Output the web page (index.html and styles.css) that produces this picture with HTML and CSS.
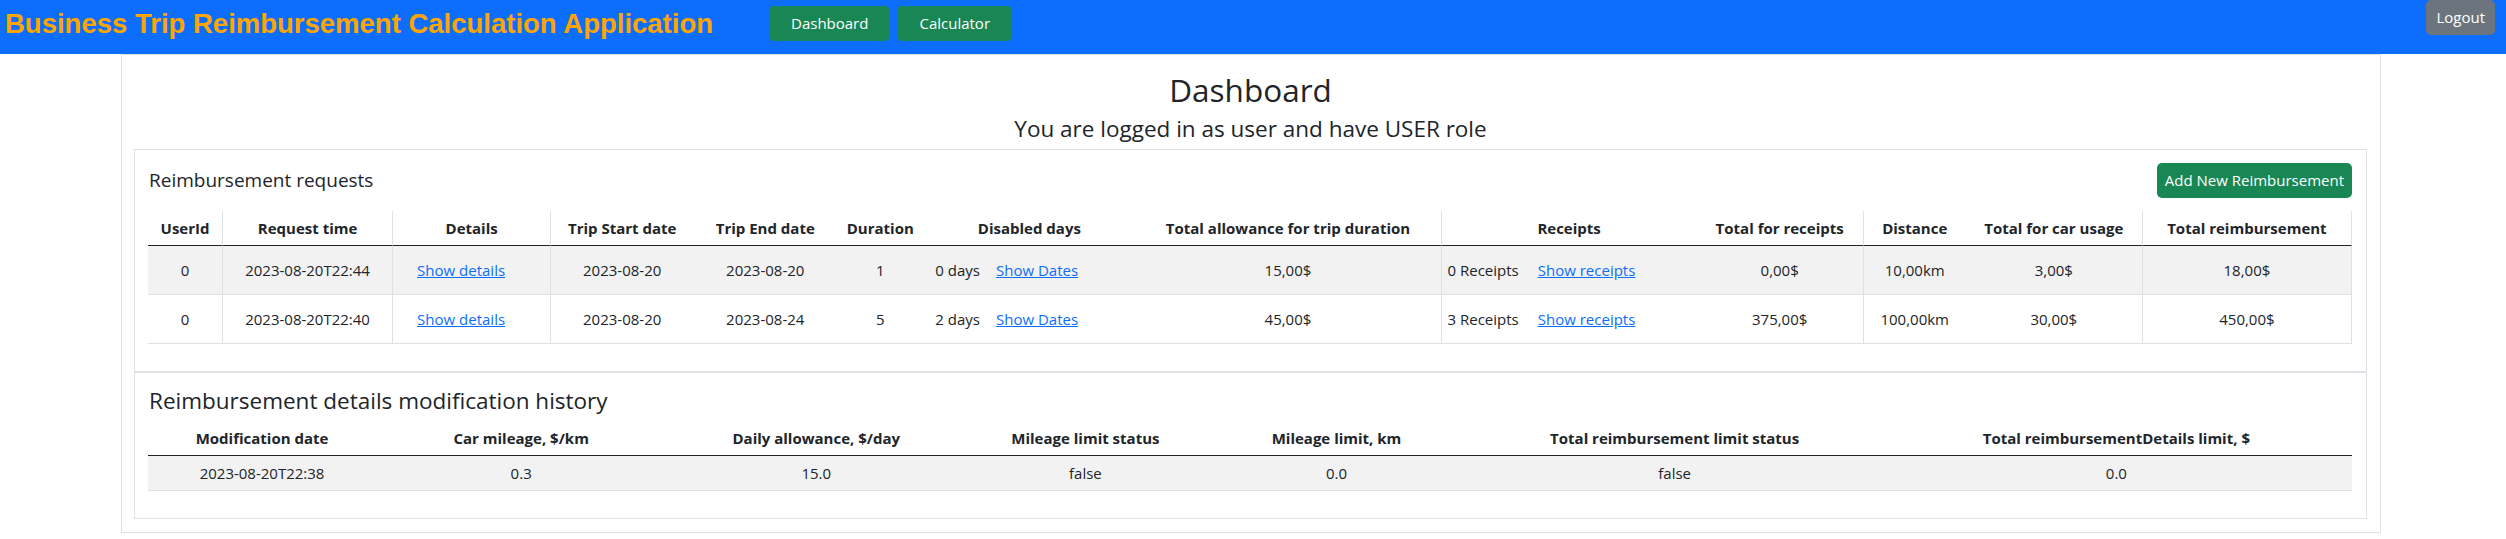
FILE: index.html
```html
<!DOCTYPE html>
<html lang="en">
<head>
<meta charset="utf-8">
<title>Dashboard</title>
<link rel="stylesheet" href="styles.css">
</head>
<body>
<nav class="topbar">
  <span class="brand">Business Trip Reimbursement Calculation Application</span>
  <div class="nav-links">
    <a class="btn btn-green nav-btn" href="#">Dashboard</a>
    <a class="btn btn-green nav-btn" href="#">Calculator</a>
  </div>
  <a class="btn btn-gray logout" href="#">Logout</a>
</nav>

<main class="page">
  <h2 class="page-title">Dashboard</h2>
  <h4 class="page-sub">You are logged in as user and have USER role</h4>

  <section class="card">
    <div class="card-head">
      <h5 class="card-title">Reimbursement requests</h5>
      <a class="btn btn-green add-btn" href="#">Add New Reimbursement</a>
    </div>
    <table class="data requests">
      <colgroup>
        <col style="width:74px"><col style="width:171px"><col style="width:158px"><col style="width:142px">
        <col style="width:144px"><col style="width:86px"><col style="width:212px"><col style="width:305px">
        <col style="width:256px"><col style="width:167px"><col style="width:102px"><col style="width:176px">
        <col style="width:210px">
      </colgroup>
      <thead>
        <tr>
          <th>UserId</th>
          <th class="bl br">Request time</th>
          <th class="br">Details</th>
          <th>Trip Start date</th>
          <th>Trip End date</th>
          <th>Duration</th>
          <th>Disabled days</th>
          <th>Total allowance for trip duration</th>
          <th class="bl">Receipts</th>
          <th class="br">Total for receipts</th>
          <th>Distance</th>
          <th>Total for car usage</th>
          <th class="bl br">Total reimbursement</th>
        </tr>
      </thead>
      <tbody>
        <tr>
          <td>0</td>
          <td class="bl br">2023-08-20T22:44</td>
          <td class="br left details"><a href="#">Show details</a></td>
          <td>2023-08-20</td>
          <td>2023-08-20</td>
          <td>1</td>
          <td class="left disabled">0 days<a class="inline-link dates" href="#">Show Dates</a></td>
          <td>15,00$</td>
          <td class="bl left receipts">0 Receipts<a class="inline-link rec" href="#">Show receipts</a></td>
          <td class="br">0,00$</td>
          <td>10,00km</td>
          <td>3,00$</td>
          <td class="bl br">18,00$</td>
        </tr>
        <tr>
          <td>0</td>
          <td class="bl br">2023-08-20T22:40</td>
          <td class="br left details"><a href="#">Show details</a></td>
          <td>2023-08-20</td>
          <td>2023-08-24</td>
          <td>5</td>
          <td class="left disabled">2 days<a class="inline-link dates" href="#">Show Dates</a></td>
          <td>45,00$</td>
          <td class="bl left receipts">3 Receipts<a class="inline-link rec" href="#">Show receipts</a></td>
          <td class="br">375,00$</td>
          <td>100,00km</td>
          <td>30,00$</td>
          <td class="bl br">450,00$</td>
        </tr>
      </tbody>
    </table>
  </section>

  <section class="card">
    <h4 class="card-title-lg">Reimbursement details modification history</h4>
    <table class="data history">
      <colgroup>
        <col style="width:228px"><col style="width:290px"><col style="width:300px"><col style="width:238px">
        <col style="width:264px"><col style="width:412px"><col style="width:471px">
      </colgroup>
      <thead>
        <tr>
          <th>Modification date</th>
          <th>Car mileage, $/km</th>
          <th>Daily allowance, $/day</th>
          <th>Mileage limit status</th>
          <th>Mileage limit, km</th>
          <th>Total reimbursement limit status</th>
          <th>Total reimbursementDetails limit, $</th>
        </tr>
      </thead>
      <tbody>
        <tr>
          <td>2023-08-20T22:38</td>
          <td>0.3</td>
          <td>15.0</td>
          <td>false</td>
          <td>0.0</td>
          <td>false</td>
          <td>0.0</td>
        </tr>
      </tbody>
    </table>
  </section>
</main>
</body>
</html>
```
FILE: styles.css
```css
* {
  box-sizing: border-box;
}

body {
  margin: 0;
  font-family: "Open Sans", "Noto Sans", sans-serif;
  font-size: 15px;
  color: #212529;
  background: #ffffff;
}

a {
  color: #0d6efd;
}

/* ---------- top bar ---------- */
.topbar {
  display: flex;
  align-items: flex-start;
  height: 54px;
  background: #0d6efd;
  padding: 0 11px 0 5px;
}

.brand {
  font-family: "Liberation Sans", Arial, sans-serif;
  font-weight: 700;
  font-size: 27.5px;
  line-height: 32px;
  color: #ffa500;
  margin-top: 8px;
  white-space: nowrap;
}

.nav-links {
  display: flex;
  gap: 7px;
  margin-left: 56px;
  margin-top: 6px;
}

.btn {
  display: inline-block;
  height: 35px;
  line-height: 35px;
  font-size: 15px;
  color: #ffffff;
  text-decoration: none;
  text-align: center;
  border-radius: 5px;
  white-space: nowrap;
}

.btn-green {
  background: #198754;
}

.btn-gray {
  background: #6c757d;
}

.nav-btn {
  padding: 0 22px;
}

.logout {
  margin-left: auto;
  padding: 0 10px;
}

/* ---------- page ---------- */
.page {
  margin-left: 121px;
  width: 2260px;
  border: 1px solid #dee2e6;
  padding: 17px 13px 13px 12px;
}

.page-title {
  margin: 0 0 7px;
  font-size: 31.5px;
  line-height: 36px;
  font-weight: 500;
  text-align: center;
}

.page-sub {
  margin: 0 0 7px;
  font-size: 22.5px;
  line-height: 27px;
  font-weight: 500;
  text-align: center;
}

.card {
  border: 1px solid #dee2e6;
  padding: 13px 14px 11px 13px;
}

.card + .card {
  padding-top: 14px;
}

.card-head {
  display: flex;
  align-items: center;
  justify-content: space-between;
  margin-bottom: 13px;
}

.card-title {
  margin: 0 0 0 1px;
  font-size: 19px;
  line-height: 23px;
  font-weight: 500;
}

.add-btn {
  padding: 0 8px;
}

.card-title-lg {
  margin: 0 0 7px 1px;
  font-size: 22.5px;
  line-height: 27px;
  font-weight: 500;
}

/* ---------- tables ---------- */
.data {
  width: 100%;
  table-layout: fixed;
  border-collapse: separate;
  border-spacing: 0;
  margin-bottom: 16px;
}

.data th {
  font-weight: 700;
  padding: 7px 4px;
  line-height: 20px;
  text-align: center;
  vertical-align: middle;
  white-space: nowrap;
  border-bottom: 1px solid #212529;
}

.data td {
  padding: 0 4px;
  text-align: center;
  vertical-align: middle;
  white-space: nowrap;
  border-bottom: 1px solid #dee2e6;
}

.requests td {
  line-height: 48px;
}

.history td {
  line-height: 34px;
}

.data tbody tr:nth-child(odd) td {
  background: #f2f2f2;
}

.data .bl {
  border-left: 1px solid #dee2e6;
}

.data .br {
  border-right: 1px solid #dee2e6;
}

.data td.left {
  text-align: left;
}

.data td.details {
  padding-left: 24px;
}

.data td.disabled {
  padding-left: 12px;
}

.data td.receipts {
  padding-left: 6px;
}

.inline-link.dates {
  margin-left: 16px;
}

.inline-link.rec {
  margin-left: 19px;
}
```
